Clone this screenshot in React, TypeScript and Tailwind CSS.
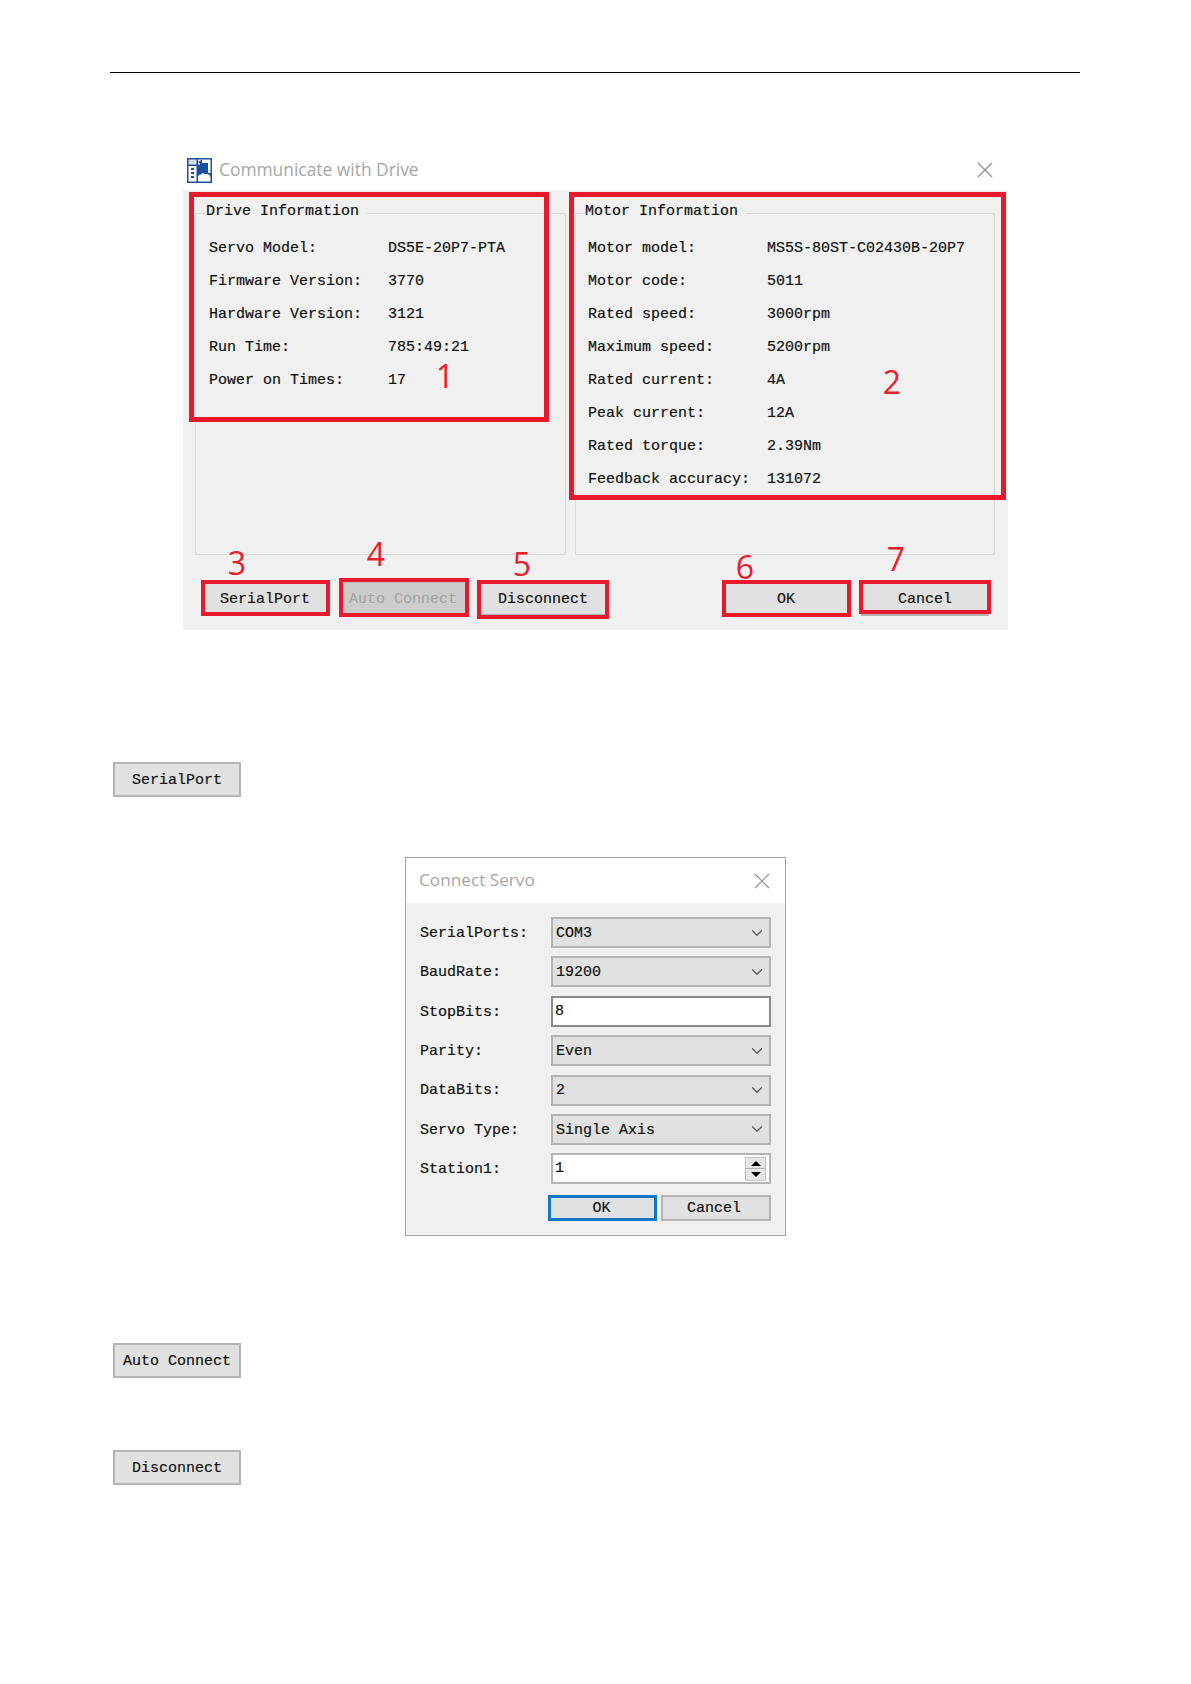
import React, { FC } from "react";
import { ChevronDown } from "lucide-react";

const mono =
  "font-['Liberation_Mono',monospace] text-[15px] text-[#111111] [-webkit-text-stroke:0.2px_#111111]";

const driveRows = [
  ["Servo Model:", "DS5E-20P7-PTA"],
  ["Firmware Version:", "3770"],
  ["Hardware Version:", "3121"],
  ["Run Time:", "785:49:21"],
  ["Power on Times:", "17"],
];

const motorRows = [
  ["Motor model:", "MS5S-80ST-C02430B-20P7"],
  ["Motor code:", "5011"],
  ["Rated speed:", "3000rpm"],
  ["Maximum speed:", "5200rpm"],
  ["Rated current:", "4A"],
  ["Peak current:", "12A"],
  ["Rated torque:", "2.39Nm"],
  ["Feedback accuracy:", "131072"],
];

const CloseIcon: FC = () => (
  <svg width="16" height="16" viewBox="0 0 16 16" className="shrink-0">
    <path d="M1 1 L15 15 M15 1 L1 15" stroke="#8f8f8f" strokeWidth="1.2" fill="none" />
  </svg>
);

const DriveIcon: FC = () => (
  <svg width="25" height="25" viewBox="0 0 25 25" className="shrink-0">
    <rect x="0" y="0" width="25" height="25" fill="#1d4f9f" />
    <rect x="1.5" y="1.5" width="8" height="5" fill="#cfe0f2" />
    <rect x="1.5" y="8" width="8" height="15.5" fill="#ffffff" />
    <rect x="4" y="10" width="3" height="2" fill="#1d4f9f" />
    <rect x="4" y="14" width="3" height="2" fill="#1d4f9f" />
    <rect x="4" y="18" width="3" height="2" fill="#1d4f9f" />
    <rect x="11" y="1.5" width="12.5" height="5" fill="#ffffff" />
    <path d="M13 5 H21 V13 H19 V7 H13 Z" fill="#1d4f9f" />
    <path d="M11 4 L15 1.5 V7 Z" fill="#1d4f9f" />
    <rect x="21" y="6" width="2.5" height="9" fill="#ffffff" />
    <path d="M11 23.5 V19 Q11 16.5 14 16.5 Q15.5 14.5 18 16 Q23.5 15.5 23.5 20 V23.5 Z" fill="#ffffff" />
  </svg>
);

const Btn: FC<{ label: string; className?: string; disabled?: boolean }> = ({ label, className = "", disabled }) => (
  <div
    className={`w-[128px] h-[35px] pt-[4px] flex items-center justify-center border-2 font-['Liberation_Mono',monospace] text-[15px] ${
      disabled
        ? "bg-[#cccccc] border-[#bfbfbf] text-[#a3a3a3]"
        : "bg-[#e1e1e1] border-[#b4b4b4] text-[#111111] [-webkit-text-stroke:0.2px_#111111]"
    } ${className}`}
  >
    {label}
  </div>
);

const GroupBox: FC<{ title: string; titleLeft: string; rows: string[][]; rowLeft: string }> = ({
  title,
  titleLeft,
  rows,
  rowLeft,
}) => (
  <div className="relative h-[342px] border border-[#d9d9d9] rounded-[1px]">
    <span className={`absolute -top-[12px] ${titleLeft} bg-[#f0f0f0] pr-2 leading-[20px] ${mono}`}>{title}</span>
    <div className={`pt-[19px] ${rowLeft}`}>
      {rows.map(([k, v]) => (
        <div key={k} className={`flex items-center h-[33px] ${mono}`}>
          <span className="w-[179px] shrink-0">{k}</span>
          <span>{v}</span>
        </div>
      ))}
    </div>
  </div>
);

const Select: FC<{ value: string }> = ({ value }) => (
  <div className={`w-[220px] h-[31px] flex items-center justify-between pl-[3px] pr-[3px] bg-[#e1e1e1] border-2 border-[#b4b4b4] ${mono}`}>
    <span className="pt-[3px]">{value}</span>
    <ChevronDown size={18} strokeWidth={1.7} className="text-[#5c5c5c] [-webkit-text-stroke:0]" />
  </div>
);

const FormRow: FC<{ label: string; children: React.ReactNode }> = ({ label, children }) => (
  <div className="flex items-center h-[31px]">
    <span className={`w-[131px] shrink-0 pt-[3px] ${mono}`}>{label}</span>
    {children}
  </div>
);

const Note: FC<{ n: string; className: string }> = ({ n, className }) => (
  <span
    className={`absolute -translate-x-1/2 -translate-y-1/2 font-['Open_Sans',sans-serif] font-medium text-[32px] leading-none text-[#e8202e] ${className}`}
  >
    {n}
  </span>
);

const redBox = "absolute border-[#e8192c] pointer-events-none";

export default function App() {
  return (
    <div className="w-full h-[1684px] bg-white overflow-hidden">
      <div className="ml-[110px] w-[970px] h-[1px] mt-[72px] bg-black" />

      {/* communicate with drive */}
      <div className="relative ml-[183px] mt-[77px] w-[825px] h-[480px]">
        <div className="h-[40px] bg-white flex items-center pl-[4px] pr-[15px]">
          <DriveIcon />
          <span className="ml-[7px] -mt-[2px] font-['Open_Sans',sans-serif] text-[17.4px] text-[#a6a6a6]">Communicate with Drive</span>
          <span className="ml-auto">
            <CloseIcon />
          </span>
        </div>
        <div className="h-[440px] bg-[#f0f0f0] pt-[23px] pl-[12px]">
          <div className="grid grid-cols-[371px_420px] gap-x-[9px]">
            <GroupBox title="Drive Information" titleLeft="left-[10px]" rows={driveRows} rowLeft="pl-[13px]" />
            <GroupBox title="Motor Information" titleLeft="left-[9px]" rows={motorRows} rowLeft="pl-[12px]" />
          </div>
          <div className="flex mt-[26px] ml-[6px]">
            <Btn label="SerialPort" />
            <Btn label="Auto Connect" disabled className="ml-[10px]" />
            <Btn label="Disconnect" className="ml-[12px]" />
            <Btn label="OK" className="ml-[115px]" />
            <Btn label="Cancel" className="ml-[11px]" />
          </div>
        </div>

        {/* red annotations */}
        <div className={`${redBox} border-[5px] left-[6px] top-[42px] w-[360px] h-[230px]`} />
        <div className={`${redBox} border-[5px] left-[386px] top-[42px] w-[437px] h-[308px]`} />
        <div className={`${redBox} border-4 left-[18px] top-[430px] w-[129px] h-[36px]`} />
        <div className={`${redBox} border-4 left-[156px] top-[428px] w-[130px] h-[39px]`} />
        <div className={`${redBox} border-4 left-[294px] top-[430px] w-[132px] h-[39px]`} />
        <div className={`${redBox} border-4 left-[539px] top-[430px] w-[129px] h-[37px]`} />
        <div className={`${redBox} border-4 left-[676px] top-[430px] w-[132px] h-[34px]`} />
        <Note n="1" className="left-[262px] top-[226px]" />
        <Note n="2" className="left-[709px] top-[232px]" />
        <Note n="3" className="left-[54px] top-[413px]" />
        <Note n="4" className="left-[193px] top-[404px]" />
        <Note n="5" className="left-[339px] top-[414px]" />
        <Note n="6" className="left-[562px] top-[417px]" />
        <Note n="7" className="left-[713px] top-[409px]" />
      </div>

      <Btn label="SerialPort" className="ml-[113px] mt-[132px]" />

      {/* connect servo */}
      <div className="ml-[405px] mt-[60px] w-[381px] h-[379px] border border-[#a3a3a3] bg-[#f0f0f0]">
        <div className="h-[45px] bg-white flex items-center pl-[13px] pr-[15px] justify-between">
          <span className="-mt-[2px] font-['Open_Sans',sans-serif] text-[17.2px] text-[#a6a6a6]">Connect Servo</span>
          <CloseIcon />
        </div>
        <div className="pt-[14px] pl-[14px] flex flex-col gap-y-[8.4px]">
          <FormRow label="SerialPorts:">
            <Select value="COM3" />
          </FormRow>
          <FormRow label="BaudRate:">
            <Select value="19200" />
          </FormRow>
          <FormRow label="StopBits:">
            <div className={`w-[220px] h-[31px] flex items-center pl-[2px] pt-[2px] bg-white border-2 border-[#8a8a8a] ${mono}`}>8</div>
          </FormRow>
          <FormRow label="Parity:">
            <Select value="Even" />
          </FormRow>
          <FormRow label="DataBits:">
            <Select value="2" />
          </FormRow>
          <FormRow label="Servo Type:">
            <Select value="Single Axis" />
          </FormRow>
          <FormRow label="Station1:">
            <div className={`w-[220px] h-[31px] flex items-center justify-between pl-[2px] pr-[3px] bg-white border-2 border-[#b4b4b4] ${mono}`}>
              <span>1</span>
              <div className="w-[21px] h-[24px] flex flex-col border border-[#c4c4c4] bg-[#e6e6e6]">
                <div className="flex-1 flex items-center justify-center border-b border-[#b0b0b0]">
                  <div className="w-0 h-0 border-x-[5px] border-x-transparent border-b-[5px] border-b-black" />
                </div>
                <div className="flex-1 flex items-center justify-center">
                  <div className="w-0 h-0 border-x-[5px] border-x-transparent border-t-[5px] border-t-black" />
                </div>
              </div>
            </div>
          </FormRow>
          <div className="flex h-[26px] ml-[128px] mt-[2px]">
            <div className={`w-[109px] pt-[3px] pr-[2px] flex items-center justify-center bg-[#e1e1e1] border-[3px] border-[#0f78c8] ${mono}`}>OK</div>
            <div className={`w-[110px] ml-[4px] pt-[3px] pr-[4px] flex items-center justify-center bg-[#e1e1e1] border-2 border-[#b4b4b4] ${mono}`}>Cancel</div>
          </div>
        </div>
      </div>

      <Btn label="Auto Connect" className="ml-[113px] mt-[107px]" />
      <Btn label="Disconnect" className="ml-[113px] mt-[72px]" />
    </div>
  );
}
